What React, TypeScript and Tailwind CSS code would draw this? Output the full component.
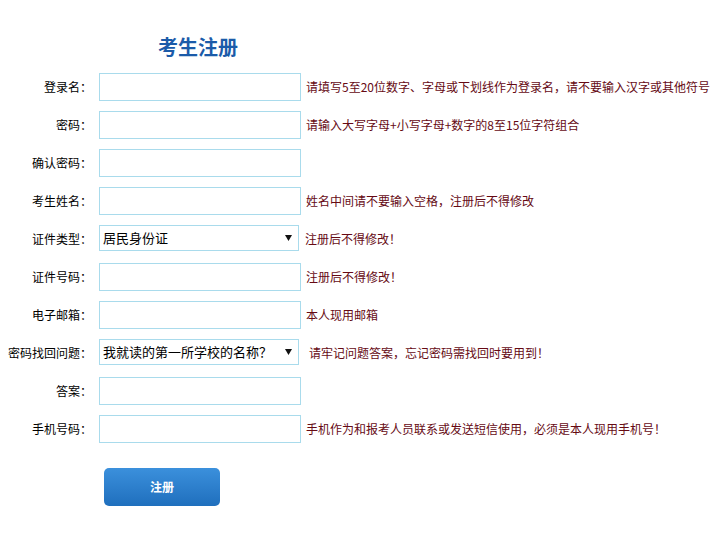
import React from "react";

type Row = {
  label: string;
  kind: "input" | "select";
  options?: string[];
  hint?: string;
  hintGap?: string;
};

const rows: Row[] = [
  { label: "登录名：", kind: "input", hint: "请填写5至20位数字、字母或下划线作为登录名，请不要输入汉字或其他符号" },
  { label: "密码：", kind: "input", hint: "请输入大写字母+小写字母+数字的8至15位字符组合" },
  { label: "确认密码：", kind: "input" },
  { label: "考生姓名：", kind: "input", hint: "姓名中间请不要输入空格，注册后不得修改" },
  { label: "证件类型：", kind: "select", options: ["居民身份证"], hint: "注册后不得修改！", hintGap: "ml-[6px]" },
  { label: "证件号码：", kind: "input", hint: "注册后不得修改！" },
  { label: "电子邮箱：", kind: "input", hint: "本人现用邮箱" },
  { label: "密码找回问题：", kind: "select", options: ["我就读的第一所学校的名称？"], hint: "请牢记问题答案，忘记密码需找回时要用到！", hintGap: "ml-[10px]" },
  { label: "答案：", kind: "input" },
  { label: "手机号码：", kind: "input", hint: "手机作为和报考人员联系或发送短信使用，必须是本人现用手机号！" },
];

export default function App() {
  return (
    <div
      lang="zh-CN"
      className="w-[722px] h-[552px] bg-white font-['Noto_Sans_CJK_SC',sans-serif] text-[12px] text-black overflow-hidden"
    >
      <h1 className="pt-[33px] pl-[158px] text-[20px] leading-[28px] font-bold text-[#1b5ba9]">考生注册</h1>
      <form className="mt-[12px] flex flex-col" onSubmit={(e) => e.preventDefault()}>
        {rows.map((r, i) => (
          <div key={i} className="flex items-start h-[38px]">
            <label className="w-[92px] shrink-0 text-right leading-[28px] whitespace-nowrap">{r.label}</label>
            {r.kind === "input" ? (
              <input
                type="text"
                className="ml-[7px] w-[202px] h-[28px] border border-[#a9dbec] bg-white outline-none px-[4px] shrink-0"
              />
            ) : (
              <div className="relative ml-[7px] w-[200px] h-[26px] shrink-0">
                <select className="appearance-none w-full h-full border border-[#a9dbec] bg-white text-[13px] leading-[24px] pl-[3px] outline-none text-black">
                  {r.options!.map((o) => (
                    <option key={o}>{o}</option>
                  ))}
                </select>
                <svg
                  className="pointer-events-none absolute right-[7px] top-[10px]"
                  width="7"
                  height="6"
                  viewBox="0 0 7 6"
                >
                  <path d="M0 0 H7 L3.5 6 Z" fill="#111" />
                </svg>
              </div>
            )}
            {r.hint && (
              <span className={`${r.hintGap ?? "ml-[5px]"} leading-[28px] whitespace-nowrap text-[#660a14]`}>{r.hint}</span>
            )}
          </div>
        ))}
        <div className="mt-[15px] pl-[104px]">
          <button
            type="submit"
            className="w-[116px] h-[38px] rounded-[5px] bg-gradient-to-b from-[#3b90dc] to-[#1f6fbd] text-white font-bold text-[12px]"
          >
            注册
          </button>
        </div>
      </form>
    </div>
  );
}
